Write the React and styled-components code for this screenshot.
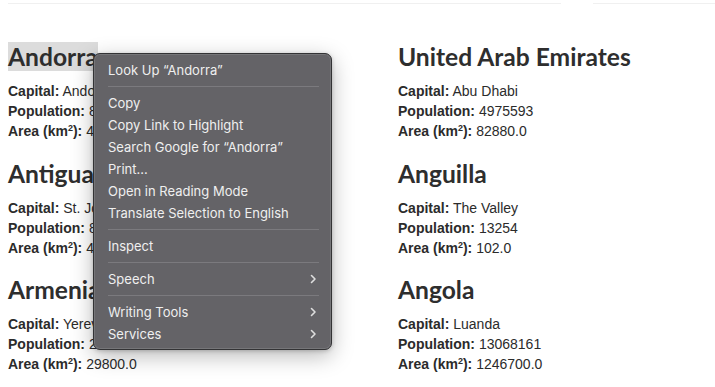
import React from 'react';
import styled, { createGlobalStyle } from 'styled-components';

const countries = [
	[
		{ name: 'Andorra', capital: 'Andorra la Vella', population: '84000', area: '468.0', selected: true },
		{ name: 'Antigua and Barbuda', capital: "St. John's", population: '86754', area: '443.0' },
		{ name: 'Armenia', capital: 'Yerevan', population: '2968000', area: '29800.0' },
	],
	[
		{ name: 'United Arab Emirates', capital: 'Abu Dhabi', population: '4975593', area: '82880.0' },
		{ name: 'Anguilla', capital: 'The Valley', population: '13254', area: '102.0' },
		{ name: 'Angola', capital: 'Luanda', population: '13068161', area: '1246700.0' },
	],
];

const menu = [
	{ label: 'Look Up \u201CAndorra\u201D' },
	'sep',
	{ label: 'Copy' },
	{ label: 'Copy Link to Highlight' },
	{ label: 'Search Google for \u201CAndorra\u201D' },
	{ label: 'Print...' },
	{ label: 'Open in Reading Mode' },
	{ label: 'Translate Selection to English' },
	'sep',
	{ label: 'Inspect' },
	'sep',
	{ label: 'Speech', sub: true },
	'sep',
	{ label: 'Writing Tools', sub: true },
	{ label: 'Services', sub: true },
];

function Chevron () {
	return (
		<svg width="7" height="10" viewBox="0 0 7 10">
			<polyline points="1.5,1.5 5,5 1.5,8.5" fill="none" stroke="#dedede" strokeWidth="1.6" strokeLinecap="round" strokeLinejoin="round" />
		</svg>
	);
}

function Country ({ c }) {
	return (
		<Section>
			<Heading><Name selected={c.selected}>{c.name}</Name></Heading>
			<Row><b>Capital:</b> {c.capital}</Row>
			<Row><b>Population:</b> {c.population}</Row>
			<Row><b>Area (km<sup>2</sup>):</b> {c.area}</Row>
		</Section>
	);
}

export default function App () {
	return (
		<Page>
			<GlobalStyle />
			<Toolbar>
				<SearchEdge />
				<FilterEdge />
			</Toolbar>
			<Grid>
				{countries.map((col, i) => (
					<Column key={i}>
						{col.map((c) => <Country key={c.name} c={c} />)}
					</Column>
				))}
			</Grid>
			<Menu>
				{menu.map((item, i) =>
					item === 'sep' ? (
						<Separator key={i} />
					) : (
						<Item key={i}>
							<span>{item.label}</span>
							{item.sub && <Chevron />}
						</Item>
					)
				)}
			</Menu>
		</Page>
	);
}

const GlobalStyle = createGlobalStyle`
	body {
		margin: 0;
		background: #fff;
		font-family: "Liberation Sans", Arial, sans-serif;
		color: #2b2b2b;
	}
`;

const Page = styled.div`
	position: relative;
	width: 715px;
	height: 387px;
	overflow: hidden;
	padding-left: 8px;
	box-sizing: border-box;
`;

const Toolbar = styled.div`
	display: flex;
	gap: 32px;
	height: 4px;
`;

const SearchEdge = styled.div`
	width: 553px;
	border-bottom: 1px solid #f0f0f0;
`;

const FilterEdge = styled.div`
	flex: 1;
	border-bottom: 1px solid #f0f0f0;
`;

const Grid = styled.div`
	display: grid;
	grid-template-columns: 390px 1fr;
	margin-top: 38px;
`;

const Column = styled.div`
	display: flex;
	flex-direction: column;
	gap: 17.5px;
`;

const Section = styled.div`
	display: flex;
	flex-direction: column;
`;

const Heading = styled.h2`
	margin: 0 0 10px;
	font-family: Lato, "Liberation Sans", sans-serif;
	font-weight: 700;
	font-size: 24.6px;
	line-height: 29px;
	color: #2e2e2e;
	white-space: nowrap;
`;

const Name = styled.span`
	display: inline-block;
	background: ${(p) => (p.selected ? '#dcdcdc' : 'transparent')};
`;

const Row = styled.div`
	font-size: 14px;
	line-height: 20px;
	color: #2b2b2b;
	white-space: nowrap;

	b {
		font-weight: 700;
	}

	sup {
		font-size: 9px;
		line-height: 0;
		vertical-align: 5px;
	}
`;

const Menu = styled.div`
	position: absolute;
	left: 93px;
	top: 53px;
	width: 239px;
	box-sizing: border-box;
	padding: 5px 0 4px;
	background: #646367;
	border: 1px solid #333335;
	border-radius: 7px;
	box-shadow: inset 0 0 0 1px rgba(255, 255, 255, 0.12), 0 6px 22px rgba(0, 0, 0, 0.28), 0 1px 4px rgba(0, 0, 0, 0.2);
	font-family: Inter, "Liberation Sans", sans-serif;
	font-size: 13px;
	color: #efefef;
`;

const Item = styled.div`
	display: flex;
	align-items: center;
	justify-content: space-between;
	height: 22px;
	padding: 0 14px 0 14px;
	white-space: nowrap;
`;

const Separator = styled.div`
	height: 1px;
	margin: 5px 12px 5px 14px;
	background: #7b7a7e;
`;
